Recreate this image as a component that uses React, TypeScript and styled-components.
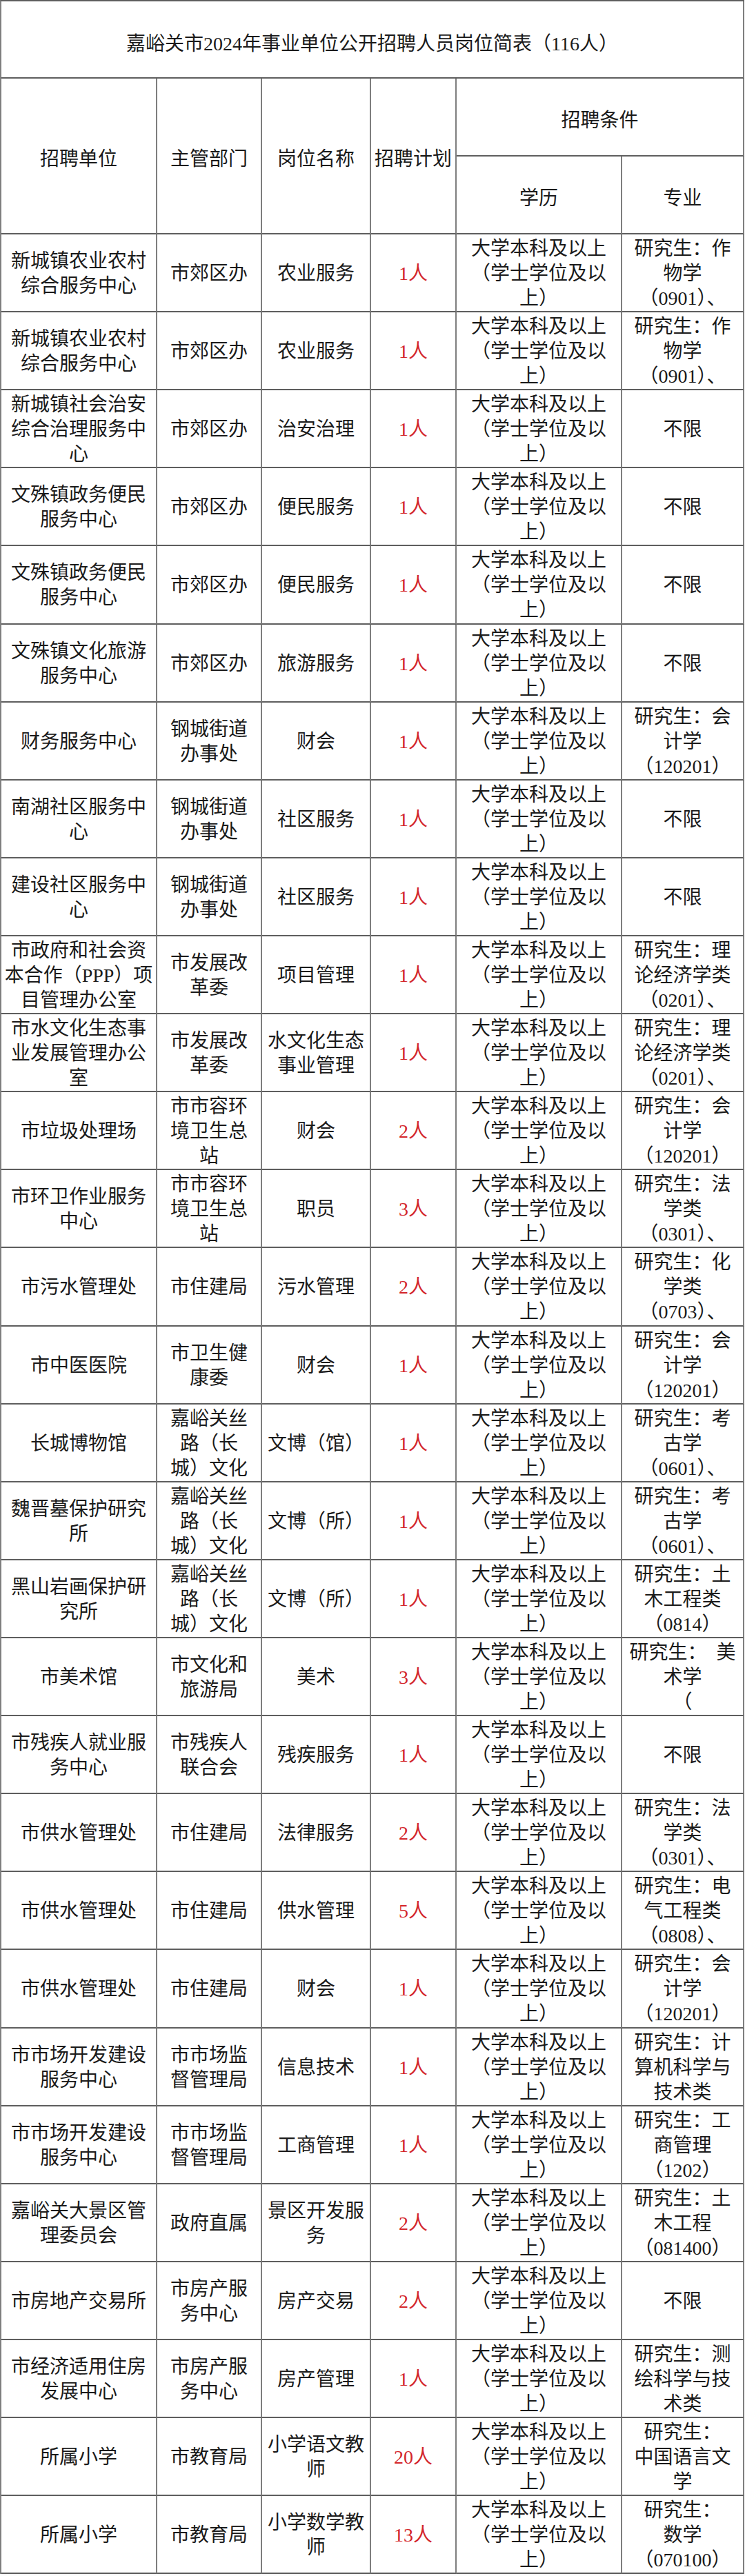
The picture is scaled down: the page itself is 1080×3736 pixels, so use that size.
import React from "react";
import styled, { createGlobalStyle } from "styled-components";

const H_LINE = "#5e5e5e";
const V_LINE = "#7e7e7e";
const COLS = "226px 152px 158px 124px 240px 177px";

const GlobalStyle = createGlobalStyle`
  html, body {
    margin: 0;
    padding: 0;
    background: #ffffff;
  }
  body {
    font-family: "Liberation Serif", "Noto Sans CJK SC", serif;
    color: #1a1a1a;
  }
`;

const Sheet = styled.div`
  width: 1079px;
  box-sizing: border-box;
  border-top: 2px solid ${H_LINE};
  border-left: 2px solid ${V_LINE};
  background: #fff;
`;

const TitleRow = styled.div`
  height: 112px;
  box-sizing: border-box;
  display: flex;
  align-items: center;
  justify-content: center;
  padding-top: 8px;
  border-right: 2px solid ${V_LINE};
  border-bottom: 2px solid ${H_LINE};
  font-size: 28px;
  white-space: nowrap;
`;

const HeaderGrid = styled.div`
  display: grid;
  grid-template-columns: ${COLS};
  grid-template-rows: 113px 113px;
`;

const HeadCell = styled.div<{ $rows?: number; $cols?: number }>`
  grid-row: span ${(p) => p.$rows ?? 1};
  grid-column: span ${(p) => p.$cols ?? 1};
  box-sizing: border-box;
  display: flex;
  align-items: center;
  justify-content: center;
  padding-top: 4px;
  border-right: 2px solid ${V_LINE};
  border-bottom: 2px solid ${H_LINE};
  font-size: 28px;
  white-space: nowrap;
  overflow: hidden;
`;

const Row = styled.div`
  display: grid;
  grid-template-columns: ${COLS};
  height: 113.12px;
`;

const Cell = styled.div<{ $red?: boolean }>`
  box-sizing: border-box;
  display: flex;
  flex-direction: column;
  align-items: center;
  justify-content: center;
  text-align: center;
  padding-top: 3px;
  overflow: hidden;
  border-right: 2px solid ${V_LINE};
  border-bottom: 2px solid ${H_LINE};
  font-size: 28px;
  line-height: 36px;
  white-space: nowrap;
  color: ${(p) => (p.$red ? "#d3262b" : "#1a1a1a")};
`;

const Line = styled.span`
  display: block;
`;

type Job = {
  unit: string[];
  dept: string[];
  post: string[];
  count: string;
  major: string[];
};

const EDU = ["大学本科及以上", "（学士学位及以", "上）"];

const XC = ["新城镇农业农村", "综合服务中心"];
const GC = ["钢城街道", "办事处"];
const FG = ["市发展改", "革委"];
const SR = ["市市容环", "境卫生总", "站"];
const SL = ["嘉峪关丝", "路（长", "城）文化"];
const SC = ["市市场开发建设", "服务中心"];
const SCJ = ["市市场监", "督管理局"];
const FC = ["市房产服", "务中心"];
const ACC = ["研究生：会", "计学", "（120201）"];
const ECO = ["研究生：理", "论经济学类", "（0201）、"];
const KG = ["研究生：考", "古学", "（0601）、"];
const LAW = ["研究生：法", "学类", "（0301）、"];
const NONE = ["不限"];

const jobs: Job[] = [
  { unit: XC, dept: ["市郊区办"], post: ["农业服务"], count: "1人", major: ["研究生：作", "物学", "（0901）、"] },
  { unit: XC, dept: ["市郊区办"], post: ["农业服务"], count: "1人", major: ["研究生：作", "物学", "（0901）、"] },
  { unit: ["新城镇社会治安", "综合治理服务中", "心"], dept: ["市郊区办"], post: ["治安治理"], count: "1人", major: NONE },
  { unit: ["文殊镇政务便民", "服务中心"], dept: ["市郊区办"], post: ["便民服务"], count: "1人", major: NONE },
  { unit: ["文殊镇政务便民", "服务中心"], dept: ["市郊区办"], post: ["便民服务"], count: "1人", major: NONE },
  { unit: ["文殊镇文化旅游", "服务中心"], dept: ["市郊区办"], post: ["旅游服务"], count: "1人", major: NONE },
  { unit: ["财务服务中心"], dept: GC, post: ["财会"], count: "1人", major: ACC },
  { unit: ["南湖社区服务中", "心"], dept: GC, post: ["社区服务"], count: "1人", major: NONE },
  { unit: ["建设社区服务中", "心"], dept: GC, post: ["社区服务"], count: "1人", major: NONE },
  { unit: ["市政府和社会资", "本合作（PPP）项", "目管理办公室"], dept: FG, post: ["项目管理"], count: "1人", major: ECO },
  { unit: ["市水文化生态事", "业发展管理办公", "室"], dept: FG, post: ["水文化生态", "事业管理"], count: "1人", major: ECO },
  { unit: ["市垃圾处理场"], dept: SR, post: ["财会"], count: "2人", major: ACC },
  { unit: ["市环卫作业服务", "中心"], dept: SR, post: ["职员"], count: "3人", major: LAW },
  { unit: ["市污水管理处"], dept: ["市住建局"], post: ["污水管理"], count: "2人", major: ["研究生：化", "学类", "（0703）、"] },
  { unit: ["市中医医院"], dept: ["市卫生健", "康委"], post: ["财会"], count: "1人", major: ACC },
  { unit: ["长城博物馆"], dept: SL, post: ["文博（馆）"], count: "1人", major: KG },
  { unit: ["魏晋墓保护研究", "所"], dept: SL, post: ["文博（所）"], count: "1人", major: KG },
  { unit: ["黑山岩画保护研", "究所"], dept: SL, post: ["文博（所）"], count: "1人", major: ["研究生：土", "木工程类", "（0814）"] },
  { unit: ["市美术馆"], dept: ["市文化和", "旅游局"], post: ["美术"], count: "3人", major: ["研究生：\u2002美", "术学", "（"] },
  { unit: ["市残疾人就业服", "务中心"], dept: ["市残疾人", "联合会"], post: ["残疾服务"], count: "1人", major: NONE },
  { unit: ["市供水管理处"], dept: ["市住建局"], post: ["法律服务"], count: "2人", major: LAW },
  { unit: ["市供水管理处"], dept: ["市住建局"], post: ["供水管理"], count: "5人", major: ["研究生：电", "气工程类", "（0808）、"] },
  { unit: ["市供水管理处"], dept: ["市住建局"], post: ["财会"], count: "1人", major: ACC },
  { unit: SC, dept: SCJ, post: ["信息技术"], count: "1人", major: ["研究生：计", "算机科学与", "技术类"] },
  { unit: SC, dept: SCJ, post: ["工商管理"], count: "1人", major: ["研究生：工", "商管理", "（1202）"] },
  { unit: ["嘉峪关大景区管", "理委员会"], dept: ["政府直属"], post: ["景区开发服", "务"], count: "2人", major: ["研究生：土", "木工程", "（081400）"] },
  { unit: ["市房地产交易所"], dept: FC, post: ["房产交易"], count: "2人", major: NONE },
  { unit: ["市经济适用住房", "发展中心"], dept: FC, post: ["房产管理"], count: "1人", major: ["研究生：测", "绘科学与技", "术类"] },
  { unit: ["所属小学"], dept: ["市教育局"], post: ["小学语文教", "师"], count: "20人", major: ["研究生：", "中国语言文", "学"] },
  { unit: ["所属小学"], dept: ["市教育局"], post: ["小学数学教", "师"], count: "13人", major: ["研究生：", "数学", "（070100）"] },
];

function Lines({ items }: { items: string[] }) {
  return (
    <>
      {items.map((t, i) => (
        <Line key={i}>{t}</Line>
      ))}
    </>
  );
}

export default function App() {
  return (
    <>
      <GlobalStyle />
      <Sheet>
        <TitleRow>嘉峪关市2024年事业单位公开招聘人员岗位简表（116人）</TitleRow>
        <HeaderGrid>
          <HeadCell $rows={2}>招聘单位</HeadCell>
          <HeadCell $rows={2}>主管部门</HeadCell>
          <HeadCell $rows={2}>岗位名称</HeadCell>
          <HeadCell $rows={2}>招聘计划</HeadCell>
          <HeadCell $cols={2}>招聘条件</HeadCell>
          <HeadCell>学历</HeadCell>
          <HeadCell>专业</HeadCell>
        </HeaderGrid>
        {jobs.map((j, i) => (
          <Row key={i}>
            <Cell>
              <Lines items={j.unit} />
            </Cell>
            <Cell>
              <Lines items={j.dept} />
            </Cell>
            <Cell>
              <Lines items={j.post} />
            </Cell>
            <Cell $red>{j.count}</Cell>
            <Cell>
              <Lines items={EDU} />
            </Cell>
            <Cell>
              <Lines items={j.major} />
            </Cell>
          </Row>
        ))}
      </Sheet>
    </>
  );
}
